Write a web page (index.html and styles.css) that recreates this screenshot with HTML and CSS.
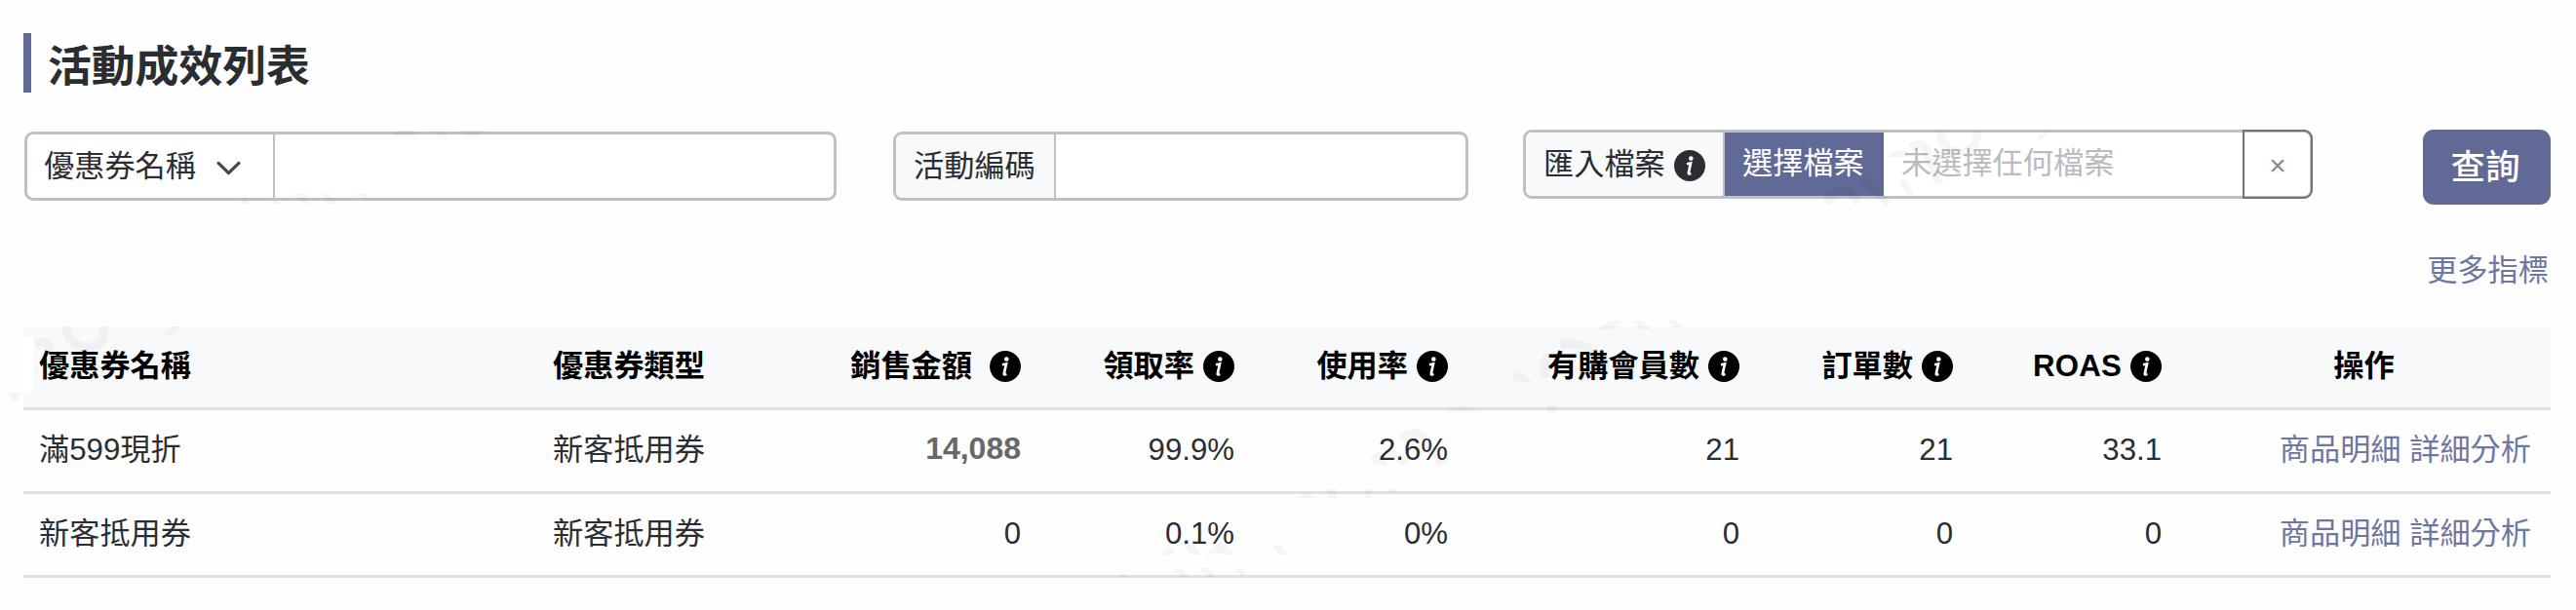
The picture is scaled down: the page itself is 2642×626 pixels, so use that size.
FILE: index.html
```
<!DOCTYPE html>
<html lang="zh-Hant">
<head>
<meta charset="utf-8">
<title>活動成效列表</title>
<link rel="stylesheet" href="styles.css">
</head>
<body>
<svg class="defs" width="0" height="0"><symbol id="info" viewBox="0 0 32 32"><circle cx="16" cy="16" r="16" fill="currentColor"/><circle cx="17.3" cy="8.6" r="2.3" fill="#fff"/><path d="M13 14.2l4-.8-2.2 10q-.3 1.6 2.6.6" fill="none" stroke="#fff" stroke-width="2.7"/></symbol></svg>
<h1 class="title">活動成效列表</h1>
<form class="filters">
  <div class="group group-name"><div class="select">優惠券名稱<svg class="chevron" viewBox="0 0 24 14"><path d="M2 2l10 10L22 2" fill="none" stroke="#42474d" stroke-width="3" stroke-linecap="round" stroke-linejoin="round"/></svg></div><div class="field"></div></div>
  <div class="group group-code"><div class="addon">活動編碼</div><div class="field"></div></div>
  <div class="group group-file"><div class="addon">匯入檔案<svg class="info"><use href="#info"/></svg></div><div class="choose">選擇檔案</div><div class="file">未選擇任何檔案</div><div class="clear">×</div></div>
  <button type="button" class="search">查詢</button>
</form>
<div class="more"><a>更多指標</a></div>
<table class="report">
  <colgroup><col class="c1"><col class="c2"><col class="c3"><col class="c4"><col class="c5"><col class="c6"><col class="c7"><col class="c8"><col class="c9"></colgroup>
  <thead><tr>
    <th>優惠券名稱</th><th>優惠券類型</th>
    <th class="num wide">銷售金額<svg class="info"><use href="#info"/></svg></th>
    <th class="num">領取率<svg class="info"><use href="#info"/></svg></th>
    <th class="num">使用率<svg class="info"><use href="#info"/></svg></th>
    <th class="num">有購會員數<svg class="info"><use href="#info"/></svg></th>
    <th class="num">訂單數<svg class="info"><use href="#info"/></svg></th>
    <th class="num"><span class="roas">ROAS</span><svg class="info"><use href="#info"/></svg></th>
    <th class="center">操作</th>
  </tr></thead>
  <tbody>
    <tr><td>滿599現折</td><td>新客抵用券</td><td class="num amount">14,088</td><td class="num">99.9%</td><td class="num">2.6%</td><td class="num">21</td><td class="num">21</td><td class="num">33.1</td><td class="links"><a>商品明細</a> <a>詳細分析</a></td></tr>
    <tr><td>新客抵用券</td><td>新客抵用券</td><td class="num">0</td><td class="num">0.1%</td><td class="num">0%</td><td class="num">0</td><td class="num">0</td><td class="num">0</td><td class="links"><a>商品明細</a> <a>詳細分析</a></td></tr>
  </tbody>
</table>
<!-- Faint security watermark lying over the whole page -->
<svg class="watermark" viewBox="0 0 2642 626">
  <path d="M24 346h11v57H24z" fill="#fff"/>
  <g fill="#000" fill-opacity=".035">
    <path d="M400 140l6-6h20v6zM444 134h10l6 6h-10zM468 134h30l-8 6h-12z"/>
    <path d="M246 209l4-10 8 10zM276 209l6-4 8 4zM302 199h12l4 10h-10zM330 199h8l8 10h-12zM364 199h12v6z"/>
    <path d="M8 403h14l-4 8h-6zM167 342l10-7h8l-10 10z"/>
    <path d="M1637 338l14-9h14l-12 9zM1675 329h10l8 9h-10zM1711 329h8l6 6-7 3zM1549 388l8-8 15 12h-14z"/>
    <path d="M1482 423q16-14 35 0zM1587 415h9v8h-9zM1405 470l10-8 8 16h-12z"/>
    <path d="M1330 511l8-6 14 6zM1362 502h9v9h-9zM1399 502h8v9h-7zM1422 502h12l-5 4z"/>
    <path d="M1192 566l6-6 8 5-5 5h-8zM1216 550l16 19h-12l-6-10zM1236 569l14-12h6l10 12h-14l-4-3-5 3zM1305 560h10l6 9h-9z"/>
    <path d="M1147 592l6-4 4 4zM1203 583h10l6 9h-9zM1230 583h9l8 9h-9zM1266 583h8l4 7-6 1z"/>
    <path d="M2090 140l12-6-5 8-7 2zM1930 164l14-9h12v6h-24zM1954 184l9 15-6 2-10-15z"/>
  </g>
  <g fill="none" stroke="#000" stroke-opacity=".035" stroke-width="9">
    <path d="M68 335q2 22 22 21t16-21M36 354q12-8 16 6"/>
    <path d="M1990 134q2 22 20 22t18-22M1960 152q12-10 17 7l12 30M1874 209q4-14 18-12 10 0 14 12M1910 184l27 25"/>
    <path d="M1585 388q-3-18 4-24M1600 354q10-3 22 0t8 20l-10 16M1438 450q18-12 25 2l16 25M1424 461l18 14"/>
  </g>
</svg>
</body>
</html>
```
FILE: styles.css
```
* { box-sizing: border-box; }
body { margin: 0; padding: 34px 26px 0 24px; height: 626px; overflow: hidden; position: relative; background: #fefefe; color: #2a2d31; font: 31.2px/46px "Liberation Sans", "Noto Sans CJK TC", sans-serif; }
.defs { position: absolute; }
.watermark { position: absolute; left: 0; top: 0; width: 2642px; height: 626px; pointer-events: none; }
.title { margin: 0; height: 61px; border-left: 8px solid #616a97; padding-left: 17px; font-size: 44.8px; line-height: 68px; font-weight: 700; }
.filters { display: flex; align-items: flex-start; margin-top: 38px; padding-left: 1px; height: 77px; }
.group { display: flex; height: 71px; border: 3px solid #bcc1c6; border-radius: 9px; line-height: 63px; background: #fff; overflow: hidden; }
.group-name { width: 833px; margin-top: 2px; }
.group-code { width: 590px; margin: 2px 0 0 58px; }
.group-file { width: 810px; margin-left: 56px; overflow: visible; }
.select { width: 254px; padding-left: 17px; border-right: 2px solid #bcc1c6; display: flex; align-items: center; }
.chevron { width: 25px; height: 15px; margin: 4px 0 0 21px; }
.field { flex: 1; }
.addon { background: #f8f9fb; border-right: 2px solid #bcc1c6; padding-left: 18px; width: 164px; display: flex; align-items: center; border-radius: 6px 0 0 6px; }
.group-file .addon { width: 204px; }
.info { width: 32px; height: 32px; flex: none; margin-left: 9px; }
.group-file .info { margin-top: 2px; }
.choose { width: 163px; padding-left: 18px; background: #616a97; color: #fff; }
.file { flex: 1; padding-left: 18px; color: #b9bcbe; }
.clear { width: 72px; margin: -3px; border: 2px solid #6c757d; border-radius: 0 9px 9px 0; text-align: center; color: #868b90; font-size: 30px; line-height: 70px; }
.search { margin-left: auto; width: 131px; height: 77px; border: 0; border-radius: 11px; background: #616a97; color: #fff; font: 500 35.5px/50px "Noto Sans CJK TC", sans-serif; padding: 0 3px 6px 0; }
.more { margin-top: 45px; height: 46px; text-align: right; padding-right: 2px; }
a { color: #6f76a0; }
.report { margin-top: 34px; width: 2592px; table-layout: fixed; border-collapse: collapse; }
.c1 { width: 527px; } .c2 { width: 255px; } .c3 { width: 259px; } .c4 { width: 219px; } .c5 { width: 219px; } .c6 { width: 299px; } .c7 { width: 219px; } .c8 { width: 214px; } .c9 { width: 381px; }
th, td { text-align: left; padding: 0 18px 0 16px; white-space: nowrap; border-bottom: 3px solid #dee0e2; vertical-align: top; }
th { height: 84px; padding-top: 18px; background: #f8f9fb; color: #000; font-weight: 700; }
td { height: 86px; padding-top: 18px; }
.num { text-align: right; }
th .info { vertical-align: -6px; }
.wide .info { margin-left: 18px; }
.roas { letter-spacing: 0.2px; }
.amount { font-weight: 700; color: #66686b; font-size: 32px; padding-top: 16px; }
.center { text-align: center; }
.links { text-align: right; padding-right: 20px; }
```
